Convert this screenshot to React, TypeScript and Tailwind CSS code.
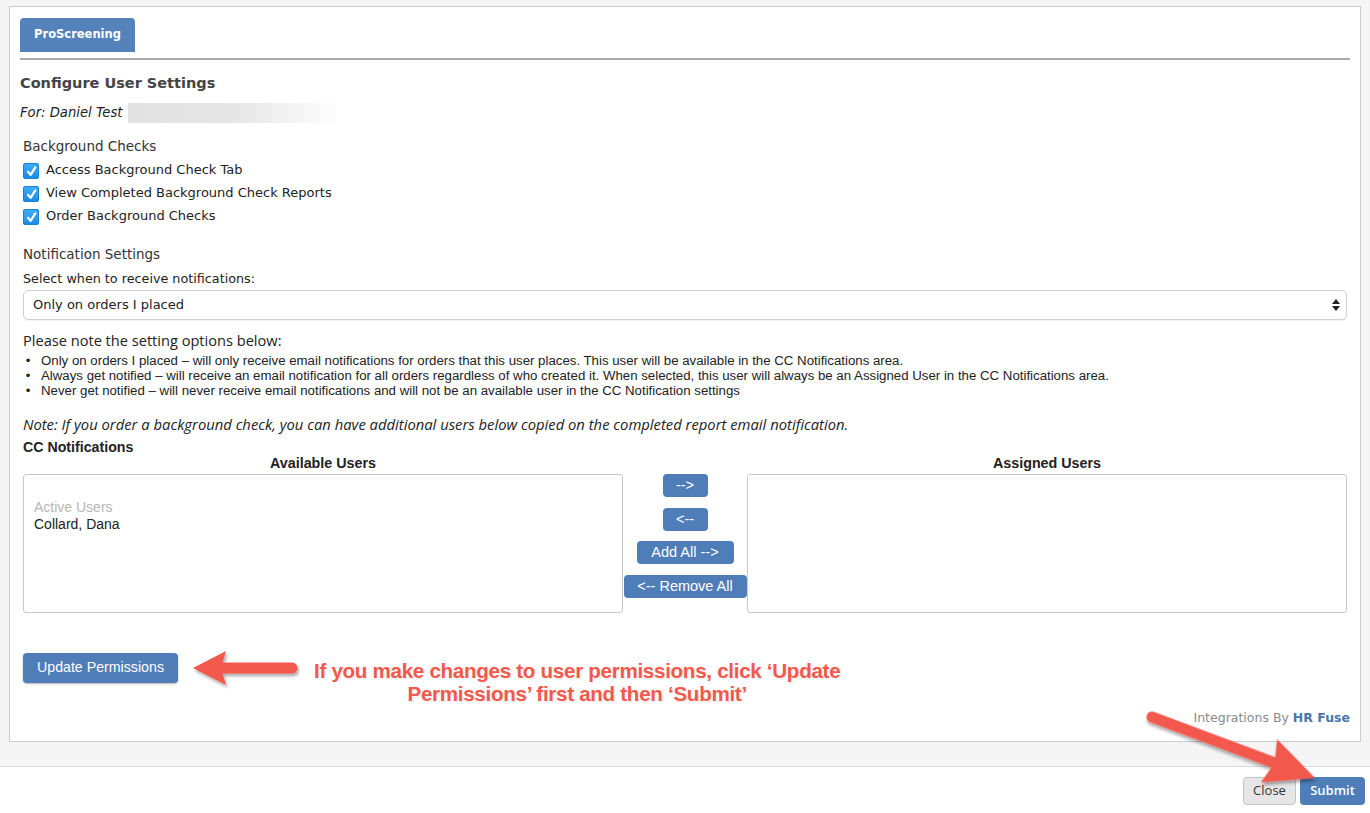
import React from "react";

const uiFont = "font-['DejaVu_Sans','Liberation_Sans',sans-serif]";
const narrowFont = "font-['Liberation_Sans',Arial,sans-serif]";
const openFont = "font-['Open_Sans',sans-serif]";

const bullets = [
  "Only on orders I placed – will only receive email notifications for orders that this user places. This user will be available in the CC Notifications area.",
  "Always get notified – will receive an email notification for all orders regardless of who created it. When selected, this user will always be an Assigned User in the CC Notifications area.",
  "Never get notified – will never receive email notifications and will not be an available user in the CC Notification settings",
];

const checks = [
  "Access Background Check Tab",
  "View Completed Background Check Reports",
  "Order Background Checks",
];

const Checkbox: React.FC = () => (
  <span className="mt-[4px] flex h-[16px] w-[16px] shrink-0 items-center justify-center rounded-[3px] bg-gradient-to-b from-[#3fb0f8] to-[#148ae8] shadow-[0_0_0_1px_#1a7fd0_inset]">
    <svg width="11" height="11" viewBox="0 0 11 11">
      <path d="M2 5.8 L4.6 8.8 L9.3 1.4" fill="none" stroke="#fff" strokeWidth="2.2" strokeLinecap="round" strokeLinejoin="round" />
    </svg>
  </span>
);

const BlueButton: React.FC<{ label: string; className?: string }> = ({ label, className }) => (
  <button
    className={`h-[23px] rounded-[4px] bg-[#4e7db8] text-[14.5px] leading-[23px] text-white ${narrowFont} ${className ?? ""}`}
  >
    {label}
  </button>
);

const SmallArrow: React.FC = () => (
  <svg width="108" height="40" viewBox="0 0 108 40" className="shrink-0">
    <defs>
      <filter id="sa" x="-20%" y="-40%" width="140%" height="180%">
        <feDropShadow dx="1.5" dy="2.5" stdDeviation="1.5" floodColor="#000" floodOpacity="0.35" />
      </filter>
    </defs>
    <g filter="url(#sa)">
      <line x1="30" y1="18" x2="100" y2="18" stroke="#f2584b" strokeWidth="11" strokeLinecap="round" />
      <polygon points="1,18 34,1 29,18 34,35" fill="#f2584b" />
    </g>
  </svg>
);

const BigArrow: React.FC = () => (
  <svg width="200" height="100" viewBox="0 0 200 100" className="pointer-events-none absolute left-[1138px] top-[700px]">
    <defs>
      <filter id="ba" x="-20%" y="-40%" width="140%" height="180%">
        <feDropShadow dx="1.5" dy="2.5" stdDeviation="1.5" floodColor="#000" floodOpacity="0.35" />
      </filter>
    </defs>
    <g filter="url(#ba)" transform="translate(14,17) rotate(20.5)">
      <line x1="0" y1="0" x2="135" y2="0" stroke="#f2584b" strokeWidth="11" strokeLinecap="round" />
      <polygon points="174,0 125,-23 131,0 125,23" fill="#f2584b" />
    </g>
  </svg>
);

export default function App() {
  return (
    <div className="relative h-[813px] w-full overflow-hidden bg-white text-[#222]">
      <div className="h-[767px] border-b border-[#dcdcdc] bg-[#f5f5f5] px-[9px] pt-[6px]">
        <div className="flex h-[736px] flex-col border border-[#cccccc] bg-white px-[10px] pt-[11px] pb-[13px]">
          {/* tabs */}
          <div className="flex">
            <div className={`flex h-[34px] w-[115px] items-center justify-center rounded-t-[4px] bg-[#5482bb] text-[11.5px] font-bold text-white ${uiFont}`}>
              ProScreening
            </div>
          </div>
          <div className="mt-[6px] h-[2px] bg-[#a9a9a9]" />

          <h2 className={`mt-[11px] text-[14.5px] font-bold leading-[24px] text-[#444] ${uiFont}`}>Configure User Settings</h2>
          <div className={`mt-[8px] flex items-center text-[13.2px] italic leading-[20px] ${uiFont}`}>
            <span>For: Daniel Test</span>
            <span className="ml-[5px] h-[20px] w-[214px] bg-gradient-to-r from-[#e2e2e2] via-[#e6e6e6] to-white" />
          </div>

          <div className="px-[3px]">
            <div className={`mt-[13px] text-[13.5px] leading-[20px] text-[#333] ${uiFont}`}>Background Checks</div>
            <div className="mt-[3px]">
              {checks.map((c) => (
                <div key={c} className={`flex h-[23px] items-start gap-[7px] text-[13px] ${uiFont}`}>
                  <Checkbox />
                  <span className="pt-[3px] leading-[16px]">{c}</span>
                </div>
              ))}
            </div>

            <div className={`mt-[16px] text-[13.5px] leading-[20px] text-[#333] ${uiFont}`}>Notification Settings</div>
            <div className={`mt-[5px] text-[12.75px] leading-[20px] ${uiFont}`}>Select when to receive notifications:</div>
            <div className={`relative mt-[1px] flex h-[30px] items-center rounded-[5px] border border-[#cfcfcf] bg-white pl-[9px] text-[13px] shadow-[0_1px_1px_rgba(0,0,0,0.06)] ${uiFont}`}>
              Only on orders I placed
              <svg width="8" height="12" viewBox="0 0 8 12" className="absolute right-[6px] top-[8px]">
                <polygon points="4,0 8,5 0,5" fill="#222" />
                <polygon points="0,7 8,7 4,12" fill="#222" />
              </svg>
            </div>

            <div className={`mt-[10px] text-[14.6px] leading-[20px] ${openFont}`}>Please note the setting options below:</div>
            <ul className={`mt-[3px] text-[13.25px] leading-[15px] ${narrowFont}`}>
              {bullets.map((b) => (
                <li key={b} className="flex">
                  <span className="w-[10px] shrink-0 text-center">•</span>
                  <span className="pl-[8px]">{b}</span>
                </li>
              ))}
            </ul>

            <div className={`mt-[16px] text-[14.8px] italic leading-[20px] ${openFont}`}>
              Note: If you order a background check, you can have additional users below copied on the completed report email notification.
            </div>
            <div className={`mt-[5px] text-[14.2px] font-bold leading-[16px] ${narrowFont}`}>CC Notifications</div>

            <div className="flex">
              <div className="flex w-[600px] flex-col">
                <div className={`text-center text-[14.3px] font-bold leading-[16px] ${narrowFont}`}>Available Users</div>
                <div className={`mt-[3px] h-[139px] rounded-[3px] border border-[#c9c9c9] px-[10px] pt-[24px] text-[14px] leading-[17px] ${narrowFont}`}>
                  <div className="text-[#b5b5b5]">Active Users</div>
                  <div>Collard, Dana</div>
                </div>
              </div>
              <div className="flex w-[124px] flex-col items-center gap-[10.5px] pt-[19px]">
                <BlueButton label="-->" className="w-[45px]" />
                <BlueButton label="<--" className="w-[45px]" />
                <BlueButton label="Add All -->" className="w-[97px]" />
                <BlueButton label="<-- Remove All" className="w-[123px]" />
              </div>
              <div className="flex w-[600px] flex-col">
                <div className={`text-center text-[14.3px] font-bold leading-[16px] ${narrowFont}`}>Assigned Users</div>
                <div className="mt-[3px] h-[139px] rounded-[3px] border border-[#c9c9c9]" />
              </div>
            </div>

            <div className="mt-[40px] flex items-start">
              <button className={`h-[30px] w-[155px] rounded-[4px] bg-[#4e7db8] text-[14.2px] text-white shadow-[0_1px_2px_rgba(0,0,0,0.3)] ${narrowFont}`}>
                Update Permissions
              </button>
              <div className="ml-[14px] mt-[-3px]">
                <SmallArrow />
              </div>
              <div className="ml-[14px] mt-[6px] text-center font-['Liberation_Sans',Arial,sans-serif] text-[20.6px] font-bold leading-[23px] tracking-[-0.3px] text-[#f2584b] [text-shadow:0_0_2px_#fff,0_0_3px_#fff,1px_1px_2px_rgba(0,0,0,0.15)]">
                <div>If you make changes to user permissions, click ‘Update</div>
                <div>Permissions’ first and then ‘Submit’</div>
              </div>
            </div>
          </div>

          <div className={`mt-auto text-right text-[12.5px] leading-[20px] text-[#8a8a8a] ${uiFont}`}>
            Integrations By <span className="font-bold text-[#4a76a8]">HR Fuse</span>
          </div>
        </div>
      </div>

      <div className={`flex justify-end gap-[4px] pr-[5px] pt-[10px] ${openFont}`}>
        <button className="h-[28px] w-[53px] rounded-[4px] border border-[#c4c4c4] bg-[#e6e6e6] text-[13px] text-[#333]">Close</button>
        <button className="h-[28px] w-[65px] rounded-[4px] bg-[#4e7db8] text-[13px] font-semibold text-white">Submit</button>
      </div>

      <BigArrow />
    </div>
  );
}
